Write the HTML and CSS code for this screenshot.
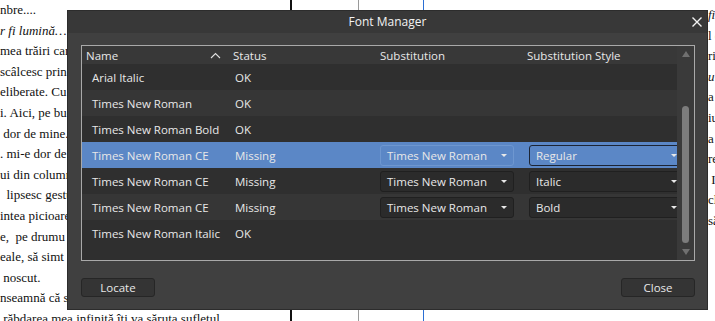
FILE: index.html
```html
<!DOCTYPE html>
<html lang="ro">
<head>
    <meta charset="UTF-8">
    <meta name="viewport" content="width=device-width, initial-scale=1.0">
    <title>Font Manager</title>
    <link rel="stylesheet" href="styles.css">
</head>
<body>
    <div class="doc">
        <div class="page-text">
            <p>nbre....</p>
            <p><i>r fi lumină…</i></p>
            <p>mea trăiri care</p>
            <p>scâlcesc prin</p>
            <p>eliberate. Cu</p>
            <p>i. Aici, pe buc</p>
            <p>&nbsp;dor de mine.</p>
            <p>. mi-e dor de</p>
            <p>ui din column</p>
            <p>&nbsp; lipsesc gestu</p>
            <p>intea picioare</p>
            <p>e,&nbsp; pe drumu</p>
            <p>eale, să simt p</p>
            <p>&nbsp;noscut.</p>
            <p>nseamnă că s</p>
            <p>&nbsp;răbdarea mea infinită îți va săruta sufletul</p>
        </div>
        <div class="rule rule-black"></div>
        <div class="rule rule-gray"></div>
        <div class="rule rule-blue">
            <div class="page-text right">
                <p><i>fi</i></p>
                <p>l c</p>
                <p>ri</p>
                <p><i>u</i></p>
                <p>a</p>
                <p>iu</p>
                <p>a v</p>
                <p>re</p>
                <p>&nbsp;I</p>
                <p>cl</p>
                <p>să</p>
            </div>
        </div>
    </div>

    <div class="dialog">
        <div class="titlebar">
            Font Manager
            <svg class="close-x" width="12" height="12" viewBox="0 0 12 12">
                <path d="M1.5 1.5 L10.5 10.5 M10.5 1.5 L1.5 10.5" stroke="#f2f2f2" stroke-width="1.4" fill="none"/>
            </svg>
        </div>
        <div class="content">
            <div class="table">
                <div class="rows-area">
                    <div class="row head">
                        <div class="cell c-name">Name
                            <svg class="sort" width="11" height="7" viewBox="0 0 11 7">
                                <polyline points="1,6 5.5,1.5 10,6" stroke="#e0e0e0" stroke-width="1.1" fill="none"/>
                            </svg>
                        </div>
                        <div class="cell c-status">Status</div>
                        <div class="cell c-sub">Substitution</div>
                        <div class="cell c-style">Substitution Style</div>
                    </div>
                    <div class="row">
                        <div class="cell c-name">Arial Italic</div>
                        <div class="cell c-status">OK</div>
                    </div>
                    <div class="row">
                        <div class="cell c-name">Times New Roman</div>
                        <div class="cell c-status">OK</div>
                    </div>
                    <div class="row">
                        <div class="cell c-name">Times New Roman Bold</div>
                        <div class="cell c-status">OK</div>
                    </div>
                    <div class="row selected">
                        <div class="cell c-name">Times New Roman CE</div>
                        <div class="cell c-status">Missing</div>
                        <div class="cell c-sub"><div class="combo">Times New Roman</div></div>
                        <div class="cell c-style"><div class="combo wide focus">Regular</div></div>
                    </div>
                    <div class="row">
                        <div class="cell c-name">Times New Roman CE</div>
                        <div class="cell c-status">Missing</div>
                        <div class="cell c-sub"><div class="combo">Times New Roman</div></div>
                        <div class="cell c-style"><div class="combo wide">Italic</div></div>
                    </div>
                    <div class="row">
                        <div class="cell c-name">Times New Roman CE</div>
                        <div class="cell c-status">Missing</div>
                        <div class="cell c-sub"><div class="combo">Times New Roman</div></div>
                        <div class="cell c-style"><div class="combo wide">Bold</div></div>
                    </div>
                    <div class="row">
                        <div class="cell c-name">Times New Roman Italic</div>
                        <div class="cell c-status">OK</div>
                    </div>
                </div>
                <div class="scrollbar">
                    <div class="arrow up"></div>
                    <div class="track"><div class="thumb"></div></div>
                    <div class="arrow down"></div>
                </div>
            </div>
            <div class="footer">
                <button>Locate</button>
                <button>Close</button>
            </div>
        </div>
    </div>
</body>
</html>
```

FILE: styles.css
```css
* { margin: 0; padding: 0; box-sizing: border-box; }
body { background: #fff; width: 715px; height: 321px; overflow: hidden; position: relative; font-family: "Open Sans", "Noto Sans", sans-serif; }

/* Document behind the dialog */
.doc { display: flex; height: 321px; }
.page-text { flex: none; width: 290px; font-family: "Liberation Serif", serif; font-size: 13px; color: #111; white-space: nowrap; overflow: hidden; }
.page-text p { height: 20.6px; line-height: 20.6px; }
.rule { flex: none; height: 321px; }
.rule-black { width: 68px; border-left: 2px solid #111; }
.rule-gray { width: 65px; border-left: 1px solid #9a9a9a; }
.rule-blue { flex: 1; min-width: 0; overflow: hidden; border-left: 1px solid #2b6fd4; }
.page-text.right { width: auto; padding-left: 284px; padding-top: 5px; }

/* Dialog */
.dialog { position: absolute; left: 67px; top: 10px; width: 641px; height: 300px; background: #404040; border: 1px solid #2c2c2c; color: #e8e8e8; font-size: 11.5px; }
.titlebar { height: 22px; line-height: 21px; background: #383838; text-align: center; font-size: 12px; color: #f2f2f2; position: relative; }
.close-x { position: absolute; right: 4px; top: 5px; }
.content { padding: 12px 12px 0 13px; }

.table { display: flex; height: 216px; border: 1px solid #a9a9a9; background: #2f2f2f; }
.rows-area { flex: 1; overflow: hidden; }
.row { display: flex; height: 26px; align-items: center; white-space: nowrap; }
.row:nth-child(odd) { background: #363636; }
.row.head { height: 18px; background: #383838; }
.row.selected { background: #5b87c6; }
.cell { flex: none; overflow: visible; }
.c-name { width: 147px; padding-left: 10px; display: flex; align-items: center; }
.c-status { width: 147px; padding-left: 6px; }
.c-sub { width: 147px; padding-left: 4px; }
.c-style { flex: 1; padding-left: 6px; }
.head .c-name { padding-left: 4px; }
.head .c-status, .head .c-sub, .head .c-style { padding-left: 4px; }
.sort { margin-left: auto; margin-right: 8px; }

.combo { position: relative; width: 134px; height: 21px; line-height: 19px; padding-left: 6px; background: #2b2b2b; border: 1px solid #202020; border-radius: 3px; color: #e8e8e8; }
.combo::after { content: ""; position: absolute; right: 6px; top: 8px; border-left: 3px solid transparent; border-right: 3px solid transparent; border-top: 3px solid #e8e8e8; }
.combo.wide { width: 155px; }
.selected .combo { background: #5b87c6; border-color: #6e97d0; }
.selected .combo.focus { border-color: #1c2535; }

/* Scrollbar */
.scrollbar { width: 17px; background: #3a3a3a; display: flex; flex-direction: column; align-items: center; }
.arrow { width: 0; height: 0; border-left: 4px solid transparent; border-right: 4px solid transparent; margin: 5px 0; }
.arrow.up { border-bottom: 6px solid #707070; }
.arrow.down { border-top: 6px solid #707070; }
.track { flex: 1; width: 7px; padding-top: 44px; padding-bottom: 1px; }
.thumb { height: 100%; background: #7c7c7c; border-radius: 4px; }

.footer { display: flex; justify-content: space-between; padding-top: 17px; }
.footer button { width: 74px; height: 19px; background: #343434; border: 1px solid #262626; border-radius: 3px; color: #e8e8e8; font-family: inherit; font-size: 11.5px; }
```
